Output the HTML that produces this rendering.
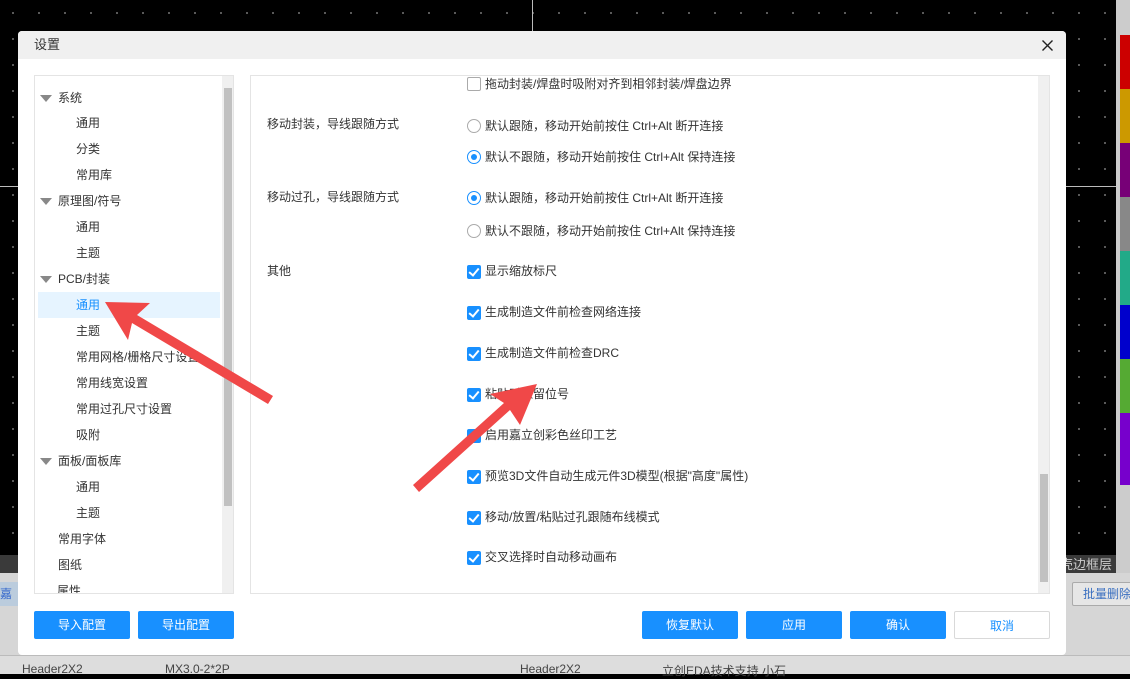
<!DOCTYPE html>
<html><head><meta charset="utf-8"><style>
*{margin:0;padding:0;box-sizing:border-box}
body{width:1130px;height:674px;overflow:hidden;position:relative;background:#000;font-family:"Liberation Sans","Noto Sans CJK SC",sans-serif;font-size:12px;color:#333}
.abs{position:absolute}
.dots{background-image:radial-gradient(circle,#777 0.8px,transparent 1px);background-size:26px 26px}
.t{position:absolute;white-space:nowrap;line-height:16px}
.cb{position:absolute;width:14px;height:14px;border-radius:2px;background:#1890ff}
.cb:after{content:"";position:absolute;left:4px;top:1px;width:4px;height:8px;border:solid #fff;border-width:0 2px 2px 0;transform:rotate(40deg)}
.cbe{position:absolute;width:14px;height:14px;border:1px solid #aaa;border-radius:2px;background:#fff}
.rd{position:absolute;width:14px;height:14px;border:1px solid #aaa;border-radius:50%;background:#fff}
.rd.on{border-color:#1890ff}
.rd.on:after{content:"";position:absolute;left:3px;top:3px;width:6px;height:6px;border-radius:50%;background:#1890ff}
.btn{position:absolute;top:611px;height:28px;width:96px;background:#1890ff;color:#fff;border-radius:2px;text-align:center;line-height:28px;font-size:12px}
.tri{position:absolute;width:0;height:0;border-left:6px solid transparent;border-right:6px solid transparent;border-top:7px solid #888}
</style></head><body>
<div class="abs dots" style="left:0;top:0;width:1116px;height:555px"></div>
<div class="abs" style="left:0;top:186px;width:1116px;height:1px;background:#bbb"></div>
<div class="abs" style="left:532px;top:0;width:1px;height:186px;background:#bbb"></div>
<div class="abs" style="left:0;top:555px;width:1116px;height:18px;background:#3a3a3a"></div>
<div class="abs" style="left:1116px;top:0;width:14px;height:574px;background:#ccc"></div>
<div class="abs" style="left:1120px;top:35px;width:10px;height:450px;background:linear-gradient(#c00 0 12%,#c90 12% 24%,#707 24% 36%,#888 36% 48%,#2a8 48% 60%,#00c 60% 72%,#5a3 72% 84%,#70c 84% 100%)"></div>
<div class="abs" style="left:1060px;top:554px;color:#ccc;font-size:13px">壳边框层</div>
<div class="abs" style="left:0;top:573px;width:1130px;height:101px;background:#d6d6d6"></div>
<div class="abs" style="left:0;top:655px;width:1130px;height:19px;background:#ddd;border-top:1px solid #bbb"></div>
<div class="abs" style="left:22px;top:662px;color:#444">Header2X2</div>
<div class="abs" style="left:165px;top:662px;color:#444">MX3.0-2*2P</div>
<div class="abs" style="left:520px;top:662px;color:#444">Header2X2</div>
<div class="abs" style="left:662px;top:662px;color:#444">立创EDA技术支持 小石</div>
<div class="abs" style="left:1072px;top:582px;width:60px;height:24px;border:1px solid #aaa;border-radius:2px;background:#e6e6e6;color:#3a6fc0;line-height:22px;padding-left:10px">批量删除</div>
<div class="abs" style="left:0;top:582px;width:18px;height:24px;background:#bcd;color:#36c;line-height:24px">嘉</div>

<!-- dialog -->
<div class="abs" style="left:18px;top:31px;width:1048px;height:624px;background:#fff;border-radius:4px;overflow:hidden">
  <div class="abs" style="left:0;top:0;width:1048px;height:28px;background:#f0f0f0"></div>
  <div class="t" style="left:16px;top:6px;font-size:13px">设置</div>
  <svg class="abs" style="left:1024px;top:9px" width="11" height="11"><path d="M0.5 0.5L10.5 10.5M10.5 0.5L0.5 10.5" stroke="#222" stroke-width="1.4"/></svg>
</div>
<!-- left tree -->
<div class="abs" style="left:34px;top:75px;width:200px;height:519px;border:1px solid #e4e4e4;overflow:hidden;background:#fff">
  <div class="abs" style="left:187px;top:0;width:11px;height:517px;background:#f0f0f0"></div>
  <div class="abs" style="left:189px;top:12px;width:8px;height:418px;background:#c1c1c1"></div>
  <div class="abs" style="left:3px;top:216px;width:182px;height:26px;background:#e6f4ff"></div>
</div>
<div class="tri" style="left:40px;top:95px"></div><div class="t" style="left:58px;top:90px">系统</div>
<div class="t" style="left:76px;top:115px">通用</div>
<div class="t" style="left:76px;top:141px">分类</div>
<div class="t" style="left:76px;top:167px">常用库</div>
<div class="tri" style="left:40px;top:198px"></div><div class="t" style="left:58px;top:193px">原理图/符号</div>
<div class="t" style="left:76px;top:219px">通用</div>
<div class="t" style="left:76px;top:245px">主题</div>
<div class="tri" style="left:40px;top:276px"></div><div class="t" style="left:58px;top:271px">PCB/封装</div>
<div class="t" style="left:76px;top:297px;color:#1890ff">通用</div>
<div class="t" style="left:76px;top:323px">主题</div>
<div class="t" style="left:76px;top:349px;width:145px;overflow:hidden">常用网格/栅格尺寸设置</div>
<div class="t" style="left:76px;top:375px">常用线宽设置</div>
<div class="t" style="left:76px;top:401px">常用过孔尺寸设置</div>
<div class="t" style="left:76px;top:427px">吸附</div>
<div class="tri" style="left:40px;top:458px"></div><div class="t" style="left:58px;top:453px">面板/面板库</div>
<div class="t" style="left:76px;top:479px">通用</div>
<div class="t" style="left:76px;top:505px">主题</div>
<div class="t" style="left:58px;top:531px">常用字体</div>
<div class="t" style="left:58px;top:557px">图纸</div>
<div class="abs" style="left:35px;top:583px;width:186px;height:10px;overflow:hidden"><div class="t" style="left:22px;top:0">属性</div></div>

<!-- right panel -->
<div class="abs" style="left:250px;top:75px;width:800px;height:519px;border:1px solid #e4e4e4;background:#fff">
  <div class="abs" style="left:787px;top:0;width:11px;height:517px;background:#f0f0f0"></div>
  <div class="abs" style="left:789px;top:398px;width:8px;height:108px;background:#c1c1c1"></div>
</div>
<div class="cbe" style="left:467px;top:77px"></div><div class="t" style="left:485px;top:76px">拖动封装/焊盘时吸附对齐到相邻封装/焊盘边界</div>
<div class="t" style="left:267px;top:116px">移动封装，导线跟随方式</div>
<div class="rd" style="left:467px;top:119px"></div><div class="t" style="left:485px;top:118px">默认跟随，移动开始前按住 Ctrl+Alt 断开连接</div>
<div class="rd on" style="left:467px;top:150px"></div><div class="t" style="left:485px;top:149px">默认不跟随，移动开始前按住 Ctrl+Alt 保持连接</div>
<div class="t" style="left:267px;top:189px">移动过孔，导线跟随方式</div>
<div class="rd on" style="left:467px;top:191px"></div><div class="t" style="left:485px;top:190px">默认跟随，移动开始前按住 Ctrl+Alt 断开连接</div>
<div class="rd" style="left:467px;top:224px"></div><div class="t" style="left:485px;top:223px">默认不跟随，移动开始前按住 Ctrl+Alt 保持连接</div>
<div class="t" style="left:267px;top:263px">其他</div>
<div class="cb" style="left:467px;top:265px"></div><div class="t" style="left:485px;top:263px">显示缩放标尺</div>
<div class="cb" style="left:467px;top:306px"></div><div class="t" style="left:485px;top:304px">生成制造文件前检查网络连接</div>
<div class="cb" style="left:467px;top:347px"></div><div class="t" style="left:485px;top:345px">生成制造文件前检查DRC</div>
<div class="cb" style="left:467px;top:388px"></div><div class="t" style="left:485px;top:386px">粘贴时保留位号</div>
<div class="cb" style="left:467px;top:429px"></div><div class="t" style="left:485px;top:427px">启用嘉立创彩色丝印工艺</div>
<div class="cb" style="left:467px;top:470px"></div><div class="t" style="left:485px;top:468px">预览3D文件自动生成元件3D模型(根据"高度"属性)</div>
<div class="cb" style="left:467px;top:511px"></div><div class="t" style="left:485px;top:509px">移动/放置/粘贴过孔跟随布线模式</div>
<div class="cb" style="left:467px;top:551px"></div><div class="t" style="left:485px;top:549px">交叉选择时自动移动画布</div>

<div class="btn" style="left:34px">导入配置</div>
<div class="btn" style="left:138px">导出配置</div>
<div class="btn" style="left:642px">恢复默认</div>
<div class="btn" style="left:746px">应用</div>
<div class="btn" style="left:850px">确认</div>
<div class="btn" style="left:954px;background:#fff;border:1px solid #d9d9d9;color:#1890ff">取消</div>

<svg class="abs" style="left:0;top:0" width="1130" height="674">
<polygon fill="#f04848" points="105,302 150,303 137,315 273,396 268,404 132,323 128,340" />
<polygon fill="#f04848" points="537,384 520,425 510,410 419,492 413,485 504,403 490,394" />
</svg>
</body></html>
